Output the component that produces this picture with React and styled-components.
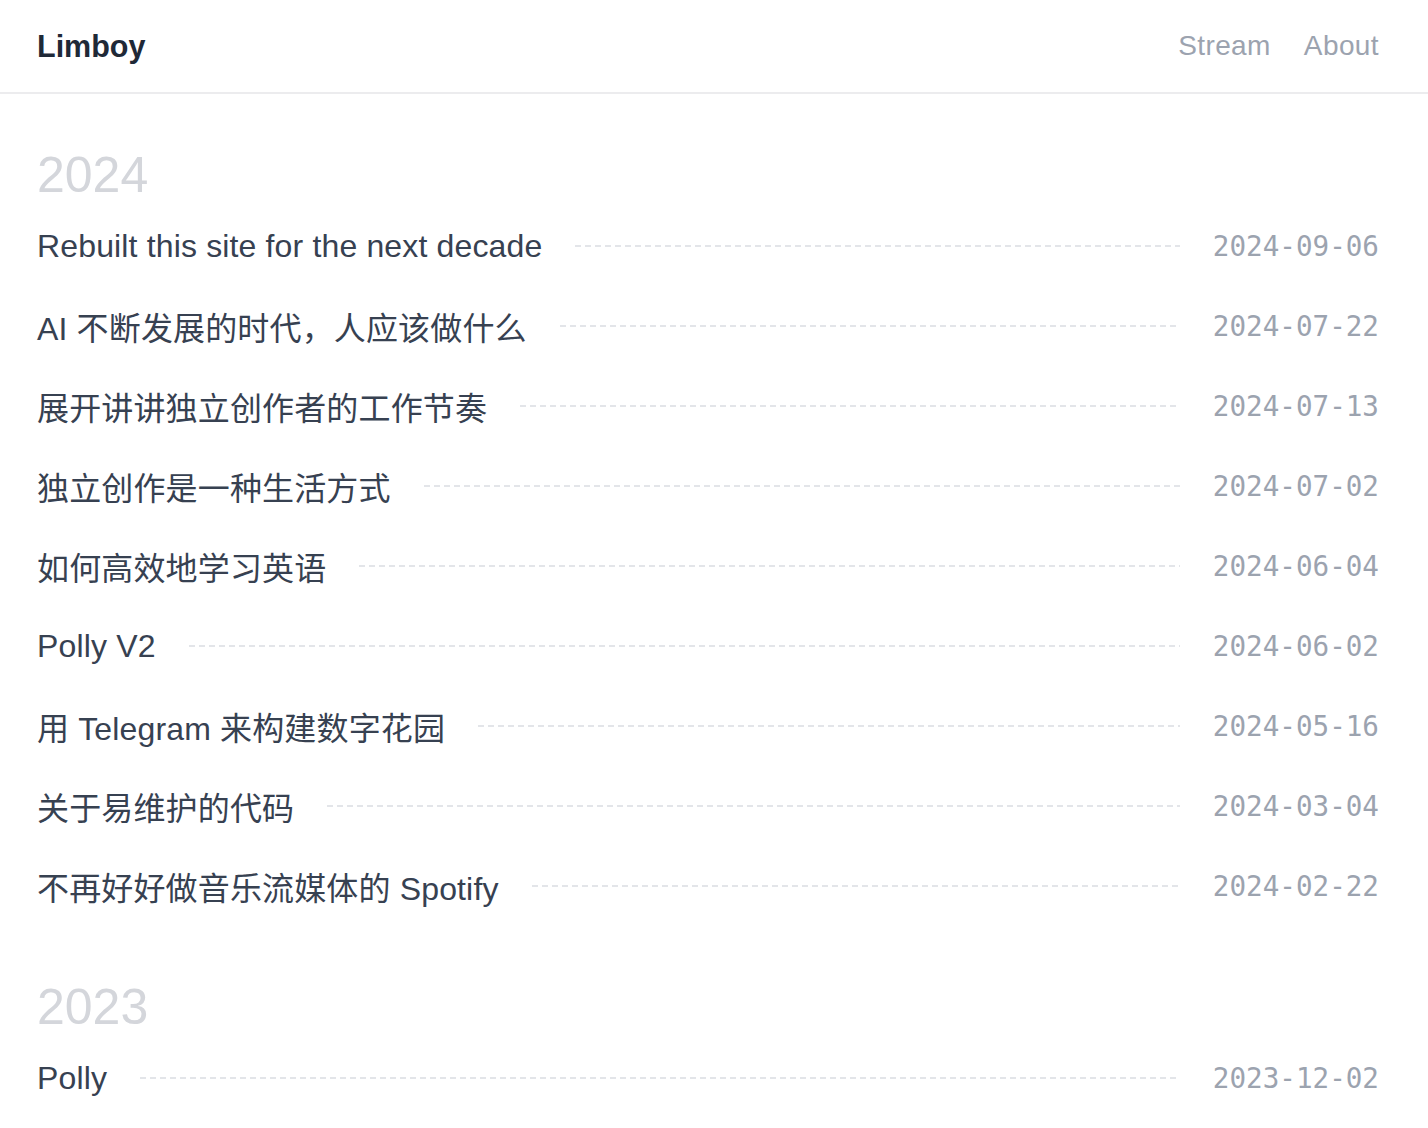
import React from 'react';
import styled, { createGlobalStyle } from 'styled-components';

const GlobalStyle = createGlobalStyle`
  html, body {
    margin: 0;
    padding: 0;
    background: #ffffff;
  }
  body {
    font-family: "Liberation Sans", "Noto Sans CJK SC", sans-serif;
    color: #374151;
  }
  a {
    text-decoration: none;
    color: inherit;
  }
`;

const Header = styled.header`
  height: 92px;
  display: flex;
  align-items: center;
  justify-content: space-between;
  padding: 0 49px 0 37px;
  border-bottom: 2px solid #ececee;
`;

const Logo = styled.a`
  font-size: 30.5px;
  font-weight: 700;
  color: #1f2937;
`;

const Nav = styled.nav`
  display: flex;
  gap: 33px;
`;

const NavLink = styled.a`
  font-size: 28px;
  letter-spacing: 0.4px;
  color: #9ca3af;
`;

const Main = styled.main`
  padding: 56px 49px 40px 37px;
`;

const YearSection = styled.section`
  & + & {
    margin-top: 56px;
  }
`;

const Year = styled.h2`
  margin: 0 0 6px;
  font-size: 50px;
  line-height: 50px;
  font-weight: 400;
  color: #d4d6db;
`;

const PostList = styled.ul`
  list-style: none;
  margin: 0;
  padding: 0;
`;

const PostRow = styled.li`
  height: 80px;
  display: flex;
  align-items: center;
`;

const Title = styled.a`
  font-size: 32px;
  letter-spacing: 0.15px;
  color: #374151;
  white-space: nowrap;
`;

const Dashes = styled.span`
  flex: 1;
  height: 1.5px;
  margin: 0 33px;
  background: repeating-linear-gradient(to right, #e3e5e9 0 6px, transparent 6px 10px);
`;

const PostDate = styled.time`
  font-family: "DejaVu Sans Mono", "Liberation Mono", monospace;
  font-size: 27.6px;
  color: #9ca3af;
`;

const posts = [
  {
    year: '2024',
    items: [
      ['Rebuilt this site for the next decade', '2024-09-06'],
      ['AI 不断发展的时代，人应该做什么', '2024-07-22'],
      ['展开讲讲独立创作者的工作节奏', '2024-07-13'],
      ['独立创作是一种生活方式', '2024-07-02'],
      ['如何高效地学习英语', '2024-06-04'],
      ['Polly V2', '2024-06-02'],
      ['用 Telegram 来构建数字花园', '2024-05-16'],
      ['关于易维护的代码', '2024-03-04'],
      ['不再好好做音乐流媒体的 Spotify', '2024-02-22'],
    ],
  },
  {
    year: '2023',
    items: [['Polly', '2023-12-02']],
  },
];

export default function App() {
  return (
    <>
      <GlobalStyle />
      <Header>
        <Logo href="#">Limboy</Logo>
        <Nav>
          <NavLink href="#">Stream</NavLink>
          <NavLink href="#">About</NavLink>
        </Nav>
      </Header>
      <Main>
        {posts.map((group) => (
          <YearSection key={group.year}>
            <Year>{group.year}</Year>
            <PostList>
              {group.items.map(([title, date]) => (
                <PostRow key={date}>
                  <Title href="#">{title}</Title>
                  <Dashes />
                  <PostDate>{date}</PostDate>
                </PostRow>
              ))}
            </PostList>
          </YearSection>
        ))}
      </Main>
    </>
  );
}
